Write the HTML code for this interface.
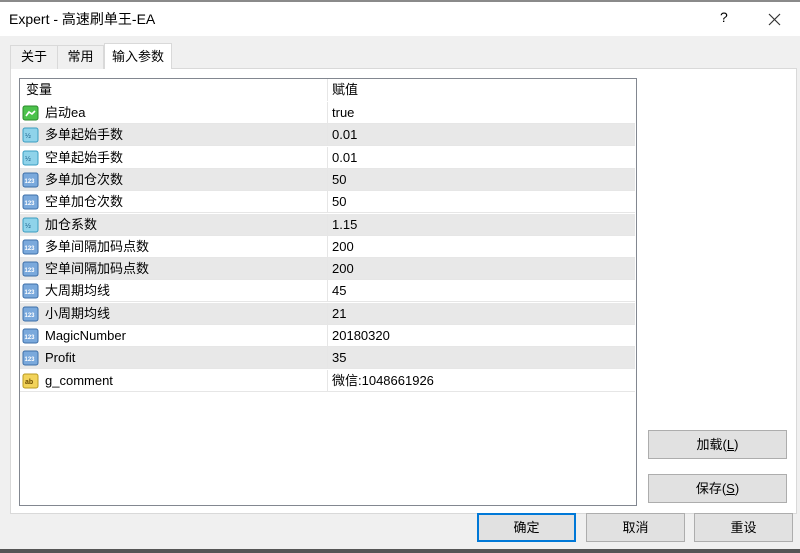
<!DOCTYPE html>
<html><head><meta charset="utf-8"><style>
*{margin:0;padding:0;box-sizing:border-box}
body{width:800px;height:553px;background:#f0f0f0;font-family:"Liberation Sans","Noto Sans CJK SC",sans-serif;font-size:13px;color:#000;position:relative;overflow:hidden}
.a{position:absolute}
.title{left:0;top:0;width:800px;height:36px;background:#fff;border-top:2px solid #8a8a8a}
.tab{top:45px;height:24px;border:1px solid #d9d9d9;border-bottom:none;background:#f0f0f0;line-height:22px;text-align:center}
.panel{left:10px;top:68px;width:787px;height:446px;background:#fff;border:1px solid #d9d9d9}
.list{left:19px;top:78px;width:618px;height:428px;background:#fff;border:1px solid #828790}
.row{position:absolute;left:1px;width:615px;height:22px;line-height:22px;border-bottom:1px solid #e6e6e6}
.row.g{background:#e8e8e8}
.c1{position:absolute;left:25px}
.c2{position:absolute;left:311px}
.div{position:absolute;left:306px;top:0;width:1px;height:100%;background:#e6e6e6}
.ic{position:absolute;left:2px;top:3px;width:17px;height:16px}
.btn{background:#e1e1e1;border:1px solid #adadad;text-align:center;font-size:13px}
</style></head><body>
<div class="a title"><span class="a" style="left:9px;top:7px;font-size:14px">Expert - 高速刷单王-EA</span>
<span class="a" style="left:720px;top:7px;font-size:14px">?</span>
<svg class="a" style="left:768px;top:11px" width="13" height="13"><path d="M1 1L12 12M12 1L1 12" stroke="#333" stroke-width="1.2"/></svg></div>
<div class="a panel"></div>
<div class="a tab" style="left:10px;width:48px">关于</div>
<div class="a tab" style="left:57px;width:47px">常用</div>
<div class="a tab" style="left:104px;top:43px;height:26px;width:68px;background:#fff;line-height:26px">输入参数</div>
<div class="a list">
<div class="row" style="top:0;border:none"><span class="c1" style="left:5px">变量</span><div class="div" style="left:306px"></div><span class="c2">赋值</span></div>
</div>
<div class="a" id="rows" style="left:19px;top:79px"></div>
<div class="a btn" style="left:648px;top:430px;width:139px;height:29px;line-height:27px">加载(<u>L</u>)</div>
<div class="a btn" style="left:648px;top:474px;width:139px;height:29px;line-height:27px">保存(<u>S</u>)</div>
<div class="a btn" style="left:477px;top:513px;width:99px;height:29px;line-height:26px;border:2px solid #0078d7">确定</div>
<div class="a btn" style="left:586px;top:513px;width:99px;height:29px;line-height:27px">取消</div>
<div class="a btn" style="left:694px;top:513px;width:99px;height:29px;line-height:27px">重设</div>
<div class="a" style="left:0;top:549px;width:800px;height:4px;background:#555"></div>
<script>
var d=[["e","启动ea","true"],["h","多单起始手数","0.01"],["h","空单起始手数","0.01"],["n","多单加仓次数","50"],["n","空单加仓次数","50"],["h","加仓系数","1.15"],["n","多单间隔加码点数","200"],["n","空单间隔加码点数","200"],["n","大周期均线","45"],["n","小周期均线","21"],["n","MagicNumber","20180320"],["n","Profit","35"],["s","g_comment","微信:1048661926"]];
var ic={e:'<rect x="1" y="1" width="15" height="14" rx="2" fill="#4cc24c" stroke="#2a8a2a"/><path d="M4 11L7 7L10 9L13 6" stroke="#fff" stroke-width="1.6" fill="none"/>',
h:'<rect x="1" y="1" width="15" height="14" rx="2" fill="#8fd3ea" stroke="#3a9cc0"/><text x="3" y="11" font-size="7" fill="#1c5f8a" font-family="Liberation Sans">½</text>',
n:'<rect x="1" y="1" width="15" height="14" rx="2" fill="#7aa9dc" stroke="#3d6fa8"/><text x="2.5" y="11" font-size="6" font-weight="bold" fill="#fff" font-family="Liberation Sans">123</text>',
s:'<rect x="1" y="1" width="15" height="14" rx="2" fill="#f2d35a" stroke="#b89a20"/><text x="3" y="11" font-size="7" font-weight="bold" fill="#6a4a00" font-family="Liberation Sans">ab</text>'};
var h='';d.forEach(function(r,i){h+='<div class="row'+(i%2?' g':'')+'" style="top:'+(23+i*22.3)+'px"><svg class="ic">'+ic[r[0]]+'</svg><span class="c1">'+r[1]+'</span><div class="div" style="left:307px"></div><span class="c2" style="left:312px">'+r[2]+'</span></div>';});
document.getElementById('rows').innerHTML=h;
</script>
</body></html>
